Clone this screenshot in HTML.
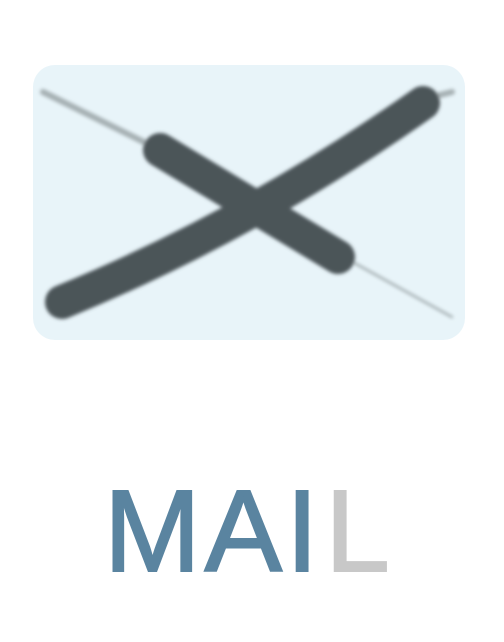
<!DOCTYPE html>
<html><head><style>
html,body{margin:0;padding:0;background:#fff;width:504px;height:642px;overflow:hidden}
.card{position:absolute;left:33px;top:65px;width:432px;height:275px;border-radius:22px;background:#e8f4f9}
svg{position:absolute;left:0;top:0}
.t{position:absolute;top:466px;left:104px;font-family:"Liberation Sans",sans-serif;font-size:116px;line-height:130px;letter-spacing:4px;color:#5a84a0;-webkit-text-stroke:2px #5a84a0}
.t span{color:#c8c8c8;-webkit-text-stroke:2px #c8c8c8;margin-left:3px}
</style></head><body>
<div class="card"></div>
<svg width="504" height="642">
<defs><filter id="b"><feGaussianBlur stdDeviation="1.8"/></filter></defs>
<g filter="url(#b)" stroke-linecap="round" fill="none">
<line x1="43" y1="92" x2="160" y2="150" stroke="#a6b0b3" stroke-width="6"/>
<line x1="340" y1="255" x2="452" y2="317" stroke="#a6b0b3" stroke-width="2.5"/>
<line x1="420" y1="100" x2="452" y2="92" stroke="#a6b0b3" stroke-width="6"/>
<line x1="160" y1="150" x2="338" y2="257" stroke="#4c5459" stroke-width="34"/>
<path d="M62 302 Q250 225 423 103" stroke="#4c5459" stroke-width="34"/>
</g>
</svg>
<div class="t">MAI<span>L</span></div>
</body></html>
